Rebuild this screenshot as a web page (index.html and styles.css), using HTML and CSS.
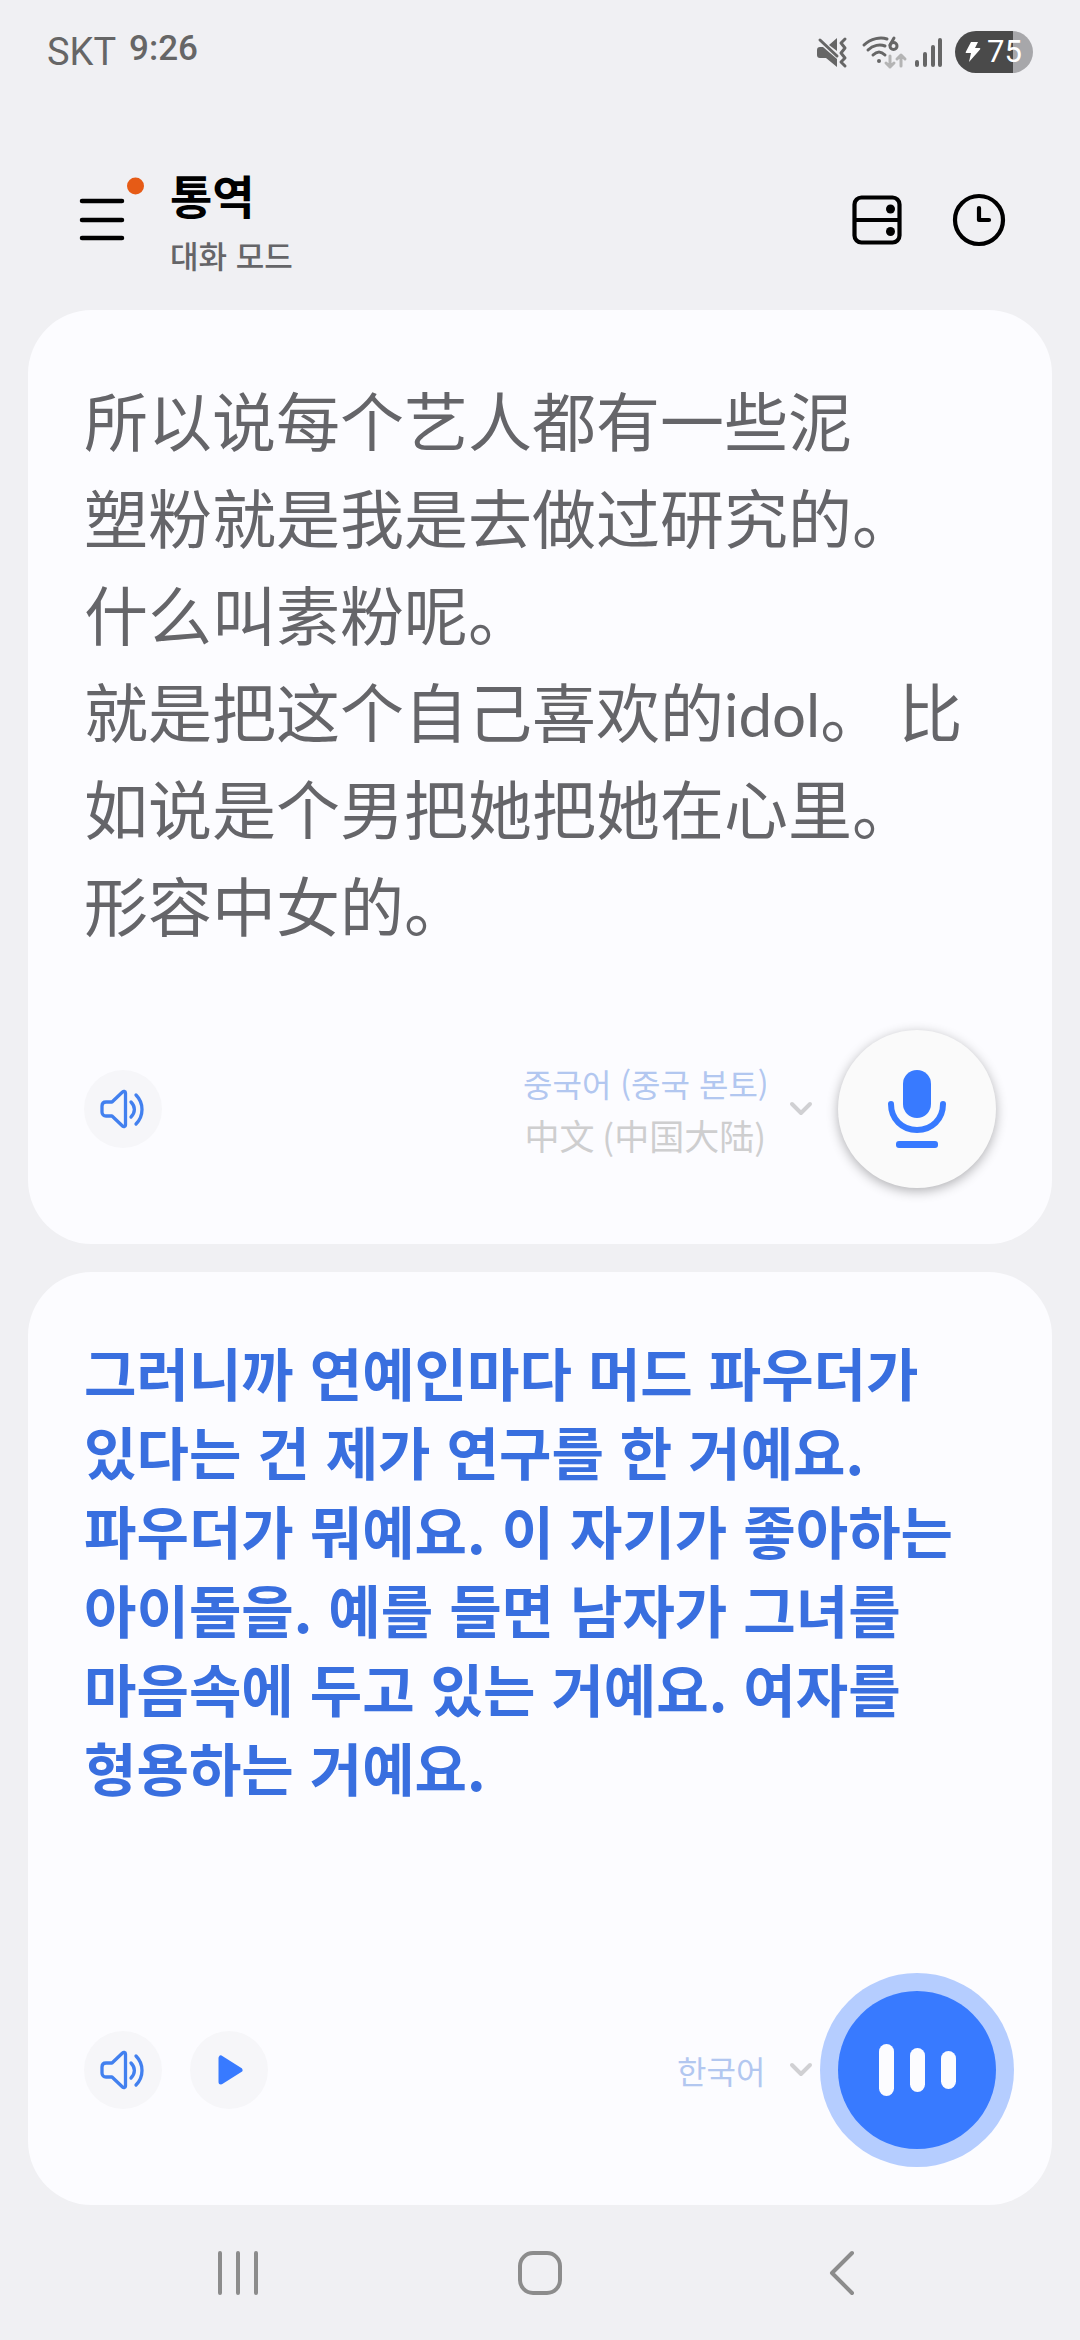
FILE: index.html
```html
<!DOCTYPE html>
<html lang="ko">
<head>
<meta charset="utf-8">
<meta name="viewport" content="width=device-width, initial-scale=1">
<title>통역</title>
<link rel="stylesheet" href="styles.css">
</head>
<body>
<div class="status-bar">
  <div class="status-left">
    <span class="carrier">SKT</span>
    <time class="clock">9:26</time>
  </div>
  <div class="status-right">
    <svg class="status-mute" width="30" height="32" viewBox="0 0 30 32" aria-hidden="true">
      <path d="M0 14c0-2 1-3 3-3h3L20 23v8L9 22H3c-2 0-3-1-3-3zM20 2v13L12 9z" fill="#666"/>
      <path d="M3 4l17 16" stroke="#666" stroke-width="3" stroke-linecap="round"/>
      <path d="M28 3l-4 4 4 5-4 5 4 5-4 4 4 4" fill="none" stroke="#666" stroke-width="3" stroke-linecap="round" stroke-linejoin="round"/>
    </svg>
    <svg class="status-wifi" width="44" height="34" viewBox="0 0 44 34" aria-hidden="true">
      <g fill="none" stroke="#666" stroke-width="3" stroke-linecap="round">
        <path d="M2 10C9 3 19 2 25 4M6 15c5-5 12-6 17-4M11 20c4-4 8-4 12 0"/>
        <path d="M32 3l-4 7"/><circle cx="31.500" cy="11" r="3.500"/>
      </g>
      <circle cx="17" cy="26" r="2" fill="#666"/>
      <path d="M28 21v11M24 28l4 4 4-4M39 31V20M35 24l4-4 4 4" fill="none" stroke="#b4b4b4" stroke-width="3" stroke-linecap="round" stroke-linejoin="round"/>
    </svg>
    <svg class="status-signal" width="28" height="32" viewBox="0 0 28 32" aria-hidden="true">
      <path d="M2 26v3M10 18v11M18 11v18M25 4v25" stroke="#666" stroke-width="4" stroke-linecap="round"/>
    </svg>
    <span class="battery">
      <svg width="16" height="22" viewBox="0 0 16 22" aria-hidden="true"><path d="M6 1h7l-3 6h4.500c1 0 1 1 .5 1.500L4 21l2-9H1.500c-1 0-1-.5-.5-1.500z" fill="#fff"/></svg>
      <span>75</span>
    </span>
  </div>
</div>

<header class="app-bar">
  <button class="icon-button menu-button" type="button" aria-label="메뉴">
    <svg width="60" height="80" viewBox="0 0 60 80" aria-hidden="true">
      <path d="M2 21h40M2 40h40M2 58h40" stroke="#000" stroke-width="4.500" stroke-linecap="round"/>
      <circle cx="55.500" cy="6" r="8.500" fill="#e65b16"/>
    </svg>
  </button>
  <div class="heading">
    <h1 class="title">통역</h1>
    <p class="subtitle">대화 모드</p>
  </div>
  <button class="icon-button" type="button" aria-label="화면 배치">
    <svg width="50" height="50" viewBox="0 0 50 50" aria-hidden="true">
      <rect x="2.500" y="2.500" width="45" height="45" rx="7" fill="none" stroke="#000" stroke-width="4.200"/>
      <path d="M2 25h46" stroke="#000" stroke-width="4"/>
      <circle cx="38.500" cy="14" r="4.500"/><circle cx="38.500" cy="36.500" r="4.500"/>
    </svg>
  </button>
  <button class="icon-button" type="button" aria-label="기록">
    <svg width="54" height="54" viewBox="0 0 54 54" aria-hidden="true">
      <circle cx="27" cy="27" r="24" fill="none" stroke="#000" stroke-width="4.200"/>
      <path d="M27 15v12h10" fill="none" stroke="#000" stroke-width="4.200" stroke-linecap="round" stroke-linejoin="round"/>
    </svg>
  </button>
</header>

<main class="panels">
  <section class="card">
    <p class="source-text" lang="zh-CN">所以说每个艺人都有一些泥<br>塑粉就是我是去做过研究的。<br>什么叫素粉呢。<br>就是把这个自己喜欢的<span class="latin">idol</span>。 比<br>如说是个男把她把她在心里。<br>形容中女的。</p>
    <div class="controls">
      <button class="round-button" type="button" aria-label="듣기">
        <svg width="46" height="40" viewBox="0 0 46 40" aria-hidden="true">
          <path d="M6 13h6L22.500 3c1-1 3-1 3 1v32c0 2-2 2-3 1L12 27H6c-2.500 0-4-1.500-4-4v-6c0-2.500 1.500-4 4-4zM31 13c4.500 4.500 4.500 10.500 0 15M36 6c8 8 8 21 0 29" fill="none" stroke="#4280ef" stroke-width="3.300" stroke-linecap="round" stroke-linejoin="round"/>
        </svg>
      </button>
      <label class="language">
        <span class="language-names">
          <select class="language-select" aria-label="상대방 언어"><option>중국어 (중국 본토)</option></select>
          <span class="language-native" lang="zh-CN">中文 (中国大陆)</span>
        </span>
        <svg width="22" height="14" viewBox="0 0 22 14" aria-hidden="true"><path d="M2 2l9 9 9-9" fill="none" stroke="#d0d0d3" stroke-width="4" stroke-linecap="round" stroke-linejoin="round"/></svg>
      </label>
      <button class="mic-button" type="button" aria-label="중국어로 말하기">
        <svg width="60" height="80" viewBox="0 0 60 80" aria-hidden="true">
          <rect x="16" y="1" width="28" height="48" rx="14" fill="#387aff"/>
          <path d="M4 35c0 15 11 26 26 26s26-11 26-26" fill="none" stroke="#387aff" stroke-width="6" stroke-linecap="round"/>
          <rect x="9" y="72" width="42" height="7" rx="3" fill="#387aff"/>
        </svg>
      </button>
    </div>
  </section>

  <section class="card">
    <p class="target-text">그러니까 연예인마다 머드 파우더가<br>있다는 건 제가 연구를 한 거예요.<br>파우더가 뭐예요. 이 자기가 좋아하는<br>아이돌을. 예를 들면 남자가 그녀를<br>마음속에 두고 있는 거예요. 여자를<br>형용하는 거예요.</p>
    <div class="controls">
      <button class="round-button" type="button" aria-label="듣기">
        <svg width="46" height="40" viewBox="0 0 46 40" aria-hidden="true">
          <path d="M6 13h6L22.500 3c1-1 3-1 3 1v32c0 2-2 2-3 1L12 27H6c-2.500 0-4-1.500-4-4v-6c0-2.500 1.500-4 4-4zM31 13c4.500 4.500 4.500 10.500 0 15M36 6c8 8 8 21 0 29" fill="none" stroke="#4280ef" stroke-width="3.300" stroke-linecap="round" stroke-linejoin="round"/>
        </svg>
      </button>
      <button class="round-button" type="button" aria-label="재생">
        <svg width="26" height="32" viewBox="0 0 26 32" aria-hidden="true"><path d="M5 4v24l19-12z" fill="#387aff" stroke="#387aff" stroke-width="5" stroke-linejoin="round"/></svg>
      </button>
      <label class="language">
        <span class="language-names">
          <select class="language-select" aria-label="내 언어"><option>한국어</option></select>
        </span>
        <svg width="22" height="14" viewBox="0 0 22 14" aria-hidden="true"><path d="M2 2l9 9 9-9" fill="none" stroke="#d0d0d3" stroke-width="4" stroke-linecap="round" stroke-linejoin="round"/></svg>
      </label>
      <button class="mic-button listening" type="button" aria-label="듣기 중지">
        <svg width="78" height="54" viewBox="0 0 78 54" aria-hidden="true">
          <g fill="#fcfcff"><rect x="1" y="1" width="15" height="52" rx="7.500"/><rect x="32" y="5" width="15" height="44" rx="7.500"/><rect x="63" y="8" width="15" height="38" rx="7.500"/></g>
        </svg>
      </button>
    </div>
  </section>
</main>

<nav class="system-nav" aria-label="시스템 탐색">
  <button class="icon-button" type="button" aria-label="최근 앱">
    <svg width="44" height="46" viewBox="0 0 44 46" aria-hidden="true"><path d="M4 3v40M22 3v40M40 3v40" stroke="#8c8c8c" stroke-width="4" stroke-linecap="round"/></svg>
  </button>
  <button class="icon-button" type="button" aria-label="홈">
    <svg width="46" height="46" viewBox="0 0 46 46" aria-hidden="true"><rect x="3" y="3" width="40" height="40" rx="13" fill="none" stroke="#8c8c8c" stroke-width="4"/></svg>
  </button>
  <button class="icon-button" type="button" aria-label="뒤로">
    <svg width="26" height="46" viewBox="0 0 26 46" aria-hidden="true"><path d="M23 3L3 23l20 20" fill="none" stroke="#8c8c8c" stroke-width="4" stroke-linecap="round" stroke-linejoin="round"/></svg>
  </button>
</nav>
</body>
</html>
```

FILE: styles.css
```css
* {
  box-sizing: border-box;
}

body {
  margin: 0;
  min-height: 100vh;
  display: flex;
  flex-direction: column;
  background: #f0f0f3;
  font-family: "Noto Sans CJK KR", sans-serif;
}

svg {
  display: block;
  overflow: visible;
}

h1,
p {
  margin: 0;
}

button,
select {
  border: 0;
  padding: 0;
  background: none;
  font: inherit;
  color: inherit;
}

/* Status bar */
.status-bar {
  display: flex;
  justify-content: space-between;
  align-items: center;
  height: 104px;
  padding: 0 47px;
  font-family: Roboto, sans-serif;
  color: #666;
}

.status-left {
  display: flex;
  align-items: center;
  gap: 13px;
}

.carrier {
  font-size: 38px;
  line-height: 44px;
}

.clock {
  font-size: 35px;
  line-height: 44px;
  font-weight: 500;
  padding-bottom: 6px;
}

.status-right {
  display: flex;
  align-items: center;
}

.status-mute {
  margin-right: 15px;
}

.status-wifi {
  margin-right: 9px;
}

.status-signal {
  margin-right: 12px;
}

.battery {
  display: flex;
  align-items: center;
  gap: 6px;
  width: 78px;
  height: 42px;
  padding-left: 10px;
  border-radius: 21px;
  background: linear-gradient(to right, #4a4a4a 75%, #a7a7aa 75%);
  color: #fff;
  font-size: 31px;
  line-height: 42px;
}

/* App bar */
.app-bar {
  display: flex;
  align-items: center;
  gap: 50px;
  padding: 29px 74px 29px 80px;
  margin-top: 26px;
}

.icon-button {
  display: flex;
  align-items: center;
  justify-content: center;
}

.menu-button {
  margin-right: -20px;
}

.heading {
  flex: 1;
}

.title {
  font-size: 46px;
  line-height: 70px;
  font-weight: 700;
  color: #000;
}

.subtitle {
  font-size: 31px;
  line-height: 52px;
  font-weight: 500;
  color: #656568;
}

/* Conversation panels */
.panels {
  flex: 1;
  display: grid;
  grid-auto-rows: 1fr;
  gap: 28px;
  padding: 0 28px;
}

.card {
  display: flex;
  flex-direction: column;
  justify-content: space-between;
  padding: 60px 56px 56px;
  border-radius: 64px;
  background: #fcfcff;
}

.source-text {
  font-family: "Noto Sans CJK SC", sans-serif;
  font-size: 64px;
  line-height: 97px;
  color: #656569;
}

.latin {
  font-family: Lato, sans-serif;
  font-size: 60px;
  line-height: 60px;
}

.target-text {
  font-size: 57px;
  line-height: 79px;
  font-weight: 700;
  color: #396fdf;
}

.controls {
  display: flex;
  align-items: center;
  gap: 28px;
}

.round-button {
  display: flex;
  align-items: center;
  justify-content: center;
  width: 78px;
  height: 78px;
  border-radius: 50%;
  background: #f6f6f9;
}

.language {
  display: flex;
  align-items: center;
  gap: 24px;
  margin-left: auto;
  margin-right: -2px;
}

.language-names {
  display: flex;
  flex-direction: column;
  align-items: flex-end;
}

.language-select {
  appearance: none;
  font-size: 32px;
  line-height: 52px;
  color: #b2c7f0;
}

.language-native {
  font-family: "Noto Sans CJK SC", sans-serif;
  font-size: 35px;
  line-height: 52px;
  color: #cececf;
}

.mic-button {
  display: flex;
  align-items: center;
  justify-content: center;
  width: 158px;
  height: 158px;
  border-radius: 50%;
  background: #fafafa;
  box-shadow: 0 3px 12px rgba(0, 0, 0, 0.3);
}

.listening {
  background: #387aff;
  box-shadow: 0 0 0 18px #b5cdff;
}

/* System navigation */
.system-nav {
  display: grid;
  grid-template-columns: repeat(3, 1fr);
  height: 135px;
  padding: 0 87px;
}
```
